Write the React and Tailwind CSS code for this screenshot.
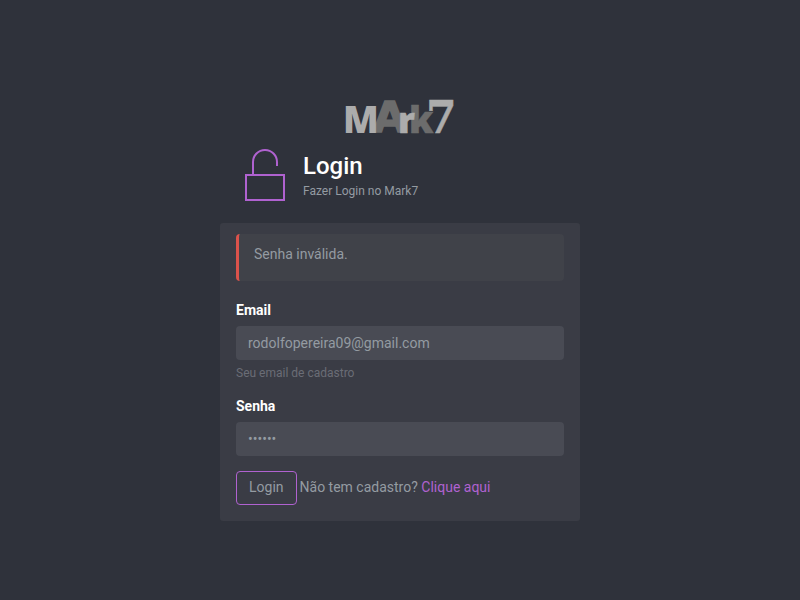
import { useState } from "react";

function Logo() {
  return (
    <svg
      className="h-[50px] w-[120px]"
      viewBox="0 0 120 50"
      role="img"
      aria-label="Mark7"
      fontFamily="'Open Sans', sans-serif"
      fontWeight="800"
    >
      <text x="33" y="40" fill="#6c6c6c" stroke="#6c6c6c" strokeWidth="1.5" fontFamily="'DejaVu Sans', sans-serif" fontWeight="700" fontSize="43">A</text>
      <text x="3" y="41" fill="#acacac" fontSize="37">M</text>
      <text x="69" y="41" fill="#6c6c6c" stroke="#6c6c6c" strokeWidth="0.5" fontSize="37">k</text>
      <text x="58" y="41" fill="#acacac" stroke="#acacac" strokeWidth="0.5" fontSize="36">r</text>
      <text x="86" y="41" fill="#acacac" stroke="#acacac" strokeWidth="0.5" fontFamily="'DejaVu Serif', serif" fontWeight="700" fontSize="44">7</text>
    </svg>
  );
}

function UnlockIcon() {
  return (
    <svg className="h-[54px] w-[42px]" viewBox="0 0 42 54" fill="none" stroke="#b062d0" strokeWidth="2" aria-hidden="true">
      <path d="M9 27V14a12 12 0 0 1 24 0v4" />
      <path d="M2 27h38v25H2z" />
    </svg>
  );
}

const inputClass =
  "block h-[34px] w-full rounded bg-[#494b54] px-3 text-sm text-[#949ba2] outline-none";

export default function App() {
  const [email, setEmail] = useState("rodolfopereira09@gmail.com");
  const [password, setPassword] = useState("secret");

  return (
    <div className="min-h-screen bg-[#2f323b] px-4 pt-[92px] pb-8 font-['Roboto',sans-serif] text-sm text-[#949ba2]">
      <main className="mx-auto w-full max-w-[360px]">
        <div className="flex justify-center">
          <Logo />
        </div>

        <header className="mt-1.5 flex gap-[17px] pl-6">
          <UnlockIcon />
          <div className="pt-1">
            <h1 className="text-2xl leading-7 font-medium text-white">Login</h1>
            <p className="mt-0.5 text-xs leading-[18px]">Fazer Login no Mark7</p>
          </div>
        </header>

        <section className="mt-[21px] rounded-[3px] bg-[#3a3c45] px-4 pt-[11px] pb-4">
          <div role="alert" className="rounded border-l-3 border-[#db524b] bg-[#404249] px-[15px] pt-2.5 pb-[17px] leading-5">
            Senha inválida.
          </div>

          <form className="mt-[19px]" onSubmit={(event) => event.preventDefault()}>
            <label htmlFor="email" className="mb-1.5 block leading-5 font-bold text-white">Email</label>
            <input id="email" type="email" className={inputClass} value={email} onChange={(event) => setEmail(event.target.value)} />
            <p className="mt-1 text-xs leading-[18px] text-[#6a6d76]">Seu email de cadastro</p>

            <label htmlFor="password" className="mt-3.5 mb-1.5 block leading-5 font-bold text-white">Senha</label>
            <input id="password" type="password" className={inputClass} value={password} onChange={(event) => setPassword(event.target.value)} />

            <div className="mt-[15px] flex items-baseline gap-[3px]">
              <button type="submit" className="h-[34px] rounded border border-[#b062d0] px-3 pb-0.5">Login</button>
              <p>
                Não tem cadastro? <a href="#cadastro" className="text-[#b062d0]">Clique aqui</a>
              </p>
            </div>
          </form>
        </section>
      </main>
    </div>
  );
}
